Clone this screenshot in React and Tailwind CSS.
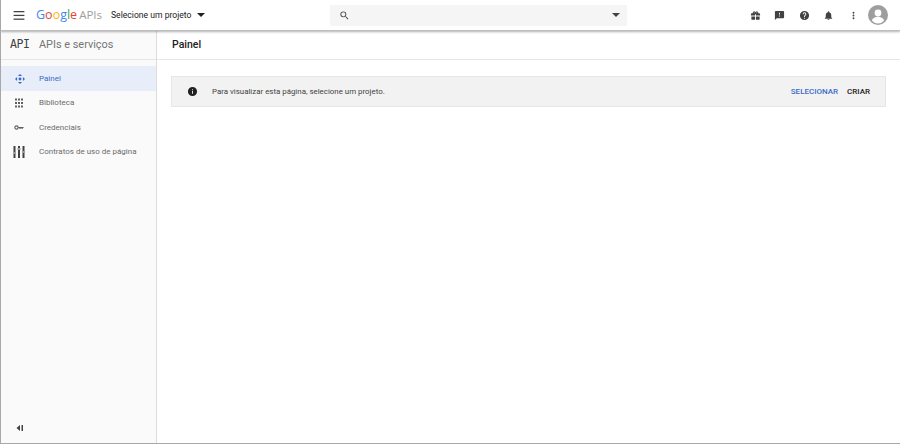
import React from 'react';

const TopIcon = ({ d, className = '' }) => (
  <svg viewBox="0 0 24 24" className={`w-[11px] h-[11px] fill-[#424242] ${className}`}>
    <path d={d} />
  </svg>
);

const NavItem = ({ icon, label, active = false }) => (
  <div className={`flex items-center h-[24.5px] pl-[14px] ${active ? 'bg-[#e8eef9]' : ''}`}>
    <div className="w-[24px] flex-none">{icon}</div>
    <span className={`text-[8px] ${active ? 'text-[#3b6bc9]' : 'text-[#6b6b6b]'}`}>{label}</span>
  </div>
);

const App = () => {
  return (
    <div className="w-[900px] h-[444px] flex flex-col bg-white overflow-hidden border-l border-b border-[#a8a8a8] font-['Roboto',sans-serif]">
      <header className="relative z-10 h-[31px] flex-none flex items-center bg-white border-b border-[#bdbdbd] shadow-[0_1px_2px_rgba(0,0,0,0.3)]">
        <svg viewBox="0 0 12 10" className="w-[12px] h-[9px] ml-[12px] fill-[#424242]">
          <rect x="0" y="0" width="12" height="1.4" />
          <rect x="0" y="4.2" width="12" height="1.4" />
          <rect x="0" y="8.4" width="12" height="1.4" />
        </svg>
        <div className="ml-[11px] w-[65px] flex items-baseline text-[12.5px] leading-none font-['Open_Sans',sans-serif]">
          <span className="text-[#4285f4]">G</span>
          <span className="text-[#ea4335]">o</span>
          <span className="text-[#fbbc05]">o</span>
          <span className="text-[#4285f4]">g</span>
          <span className="text-[#34a853]">l</span>
          <span className="text-[#ea4335]">e</span>
          <span className="ml-[2px] text-[#9e9e9e] text-[11.5px]">APIs</span>
        </div>
        <span className="ml-[10px] text-[8.6px] text-[#212121]">Selecione um projeto</span>
        <div className="ml-[6px] w-0 h-0 border-x-[4px] border-x-transparent border-t-[4px] border-t-[#212121]"></div>
        <div className="ml-[125px] w-[297px] h-[21px] flex items-center justify-between bg-[#f5f5f5] pl-[9px] pr-[7px]">
          <TopIcon d="M15.5 14h-.79l-.28-.27A6.47 6.47 0 0 0 16 9.5 6.5 6.5 0 1 0 9.5 16c1.61 0 3.09-.59 4.23-1.57l.27.28v.79l5 4.99L20.49 19l-4.99-5zm-6 0C7.01 14 5 11.99 5 9.5S7.01 5 9.5 5 14 7.01 14 9.5 11.99 14 9.5 14z" />
          <div className="w-0 h-0 border-x-[4px] border-x-transparent border-t-[4px] border-t-[#424242]"></div>
        </div>
        <div className="ml-auto flex items-center gap-[13.5px] pr-[12px]">
          <TopIcon d="M20 7h-2.2c.1-.3.2-.6.2-1a3 3 0 0 0-5.5-1.7L12 5l-.5-.7A3 3 0 0 0 6 6c0 .4.1.7.2 1H4a2 2 0 0 0-2 2v3h9V9h2v3h9V9a2 2 0 0 0-2-2zM9 7a1 1 0 1 1 0-2 1 1 0 0 1 0 2zm6 0a1 1 0 1 1 0-2 1 1 0 0 1 0 2zM3 14v6a1 1 0 0 0 1 1h7v-7H3zm10 7h7a1 1 0 0 0 1-1v-6h-8v7z" />
          <TopIcon d="M20 2H4a2 2 0 0 0-2 2v18l4-4h14a2 2 0 0 0 2-2V4a2 2 0 0 0-2-2zm-7 12h-2v-2h2v2zm0-4h-2V6h2v4z" />
          <TopIcon d="M12 2a10 10 0 1 0 0 20 10 10 0 0 0 0-20zm1 17h-2v-2h2v2zm2.07-7.75-.9.92A3.4 3.4 0 0 0 13 15h-2v-.5c0-1.1.45-2.1 1.17-2.83l1.24-1.26A2 2 0 1 0 10 9H8a4 4 0 1 1 8 0c0 .88-.36 1.68-.93 2.25z" />
          <TopIcon d="M12 22a2 2 0 0 0 2-2h-4a2 2 0 0 0 2 2zm6-6v-5c0-3.07-1.63-5.64-4.5-6.32V4a1.5 1.5 0 0 0-3 0v.68C7.64 5.36 6 7.92 6 11v5l-2 2v1h16v-1l-2-2z" />
          <TopIcon d="M12 8a2 2 0 1 0 0-4 2 2 0 0 0 0 4zm0 2a2 2 0 1 0 0 4 2 2 0 0 0 0-4zm0 6a2 2 0 1 0 0 4 2 2 0 0 0 0-4z" />
          <svg viewBox="0 0 20 20" className="w-[20px] h-[20px] -ml-[4px]">
            <circle cx="10" cy="10" r="10" fill="#9e9e9e" />
            <circle cx="10" cy="8" r="3.4" fill="#fff" />
            <path d="M3.8 15.5c1-2.6 3.6-3.8 6.2-3.8s5.200 1.200 6.200 3.800a8 8 0 0 1-12.400 0z" fill="#fff" />
          </svg>
        </div>
      </header>

      <div className="flex-1 flex min-h-0">
        <aside className="w-[156px] flex-none flex flex-col bg-[#fafafa] border-r border-[#dcdcdc]">
          <div className="h-[29px] flex items-center pl-[9px] border-b border-[#e6e6e6]">
            <span className="w-[29px] text-[11.5px] font-['DejaVu_Sans_Mono',monospace] text-[#424242] tracking-[-0.4px]">API</span>
            <span className="text-[10.9px] text-[#757575]">APIs e serviços</span>
          </div>
          <nav className="mt-[6.25px] flex flex-col">
            <NavItem
              active
              label="Painel"
              icon={
                <svg viewBox="0 0 24 24" className="w-[10px] h-[10px] fill-[#3b6bc9]">
                  <path d="M12 0l5 5H7zM12 24l-5-5h10zM0 12l5-5v10zM24 12l-5 5V7z" />
                  <circle cx="12" cy="12" r="3.500" />
                </svg>
              }
            />
            <NavItem
              label="Biblioteca"
              icon={
                <svg viewBox="0 0 10 10" className="w-[10px] h-[10px] fill-[#616161] ml-[-1px]">
                  <rect x="1" y="0.500" width="2" height="2" /><rect x="4" y="0.500" width="2" height="2" /><rect x="7" y="0.500" width="2" height="2" />
                  <rect x="1" y="4" width="2" height="2" /><rect x="4" y="4" width="2" height="2" /><rect x="7" y="4" width="2" height="2" />
                  <rect x="1" y="7.500" width="2" height="2" /><rect x="4" y="7.500" width="2" height="2" /><rect x="7" y="7.500" width="2" height="2" />
                </svg>
              }
            />
            <NavItem
              label="Credenciais"
              icon={
                <svg viewBox="0 0 12 8" className="w-[10px] h-[7px] ml-[-1px]">
                  <circle cx="3" cy="4" r="2" fill="none" stroke="#616161" strokeWidth="1.400" />
                  <path d="M5 3.300h6.500v1.400h-1v1.200H9V4.700H8v1.200H6.500V4.700H5z" fill="#616161" />
                </svg>
              }
            />
            <NavItem
              label="Contratos de uso de página"
              icon={
                <svg viewBox="0 0 12 12" className="w-[12px] h-[12px] ml-[-2px] fill-[#424242]">
                  <rect x="0.500" y="0" width="2" height="6" /><rect x="0.500" y="8" width="2" height="4" />
                  <rect x="5" y="0" width="2" height="2" /><rect x="5" y="4" width="2" height="8" />
                  <rect x="9.500" y="0" width="2" height="5" /><rect x="9.500" y="7" width="2" height="5" />
                  <rect x="0" y="6.500" width="3" height="1" /><rect x="4.500" y="2.500" width="3" height="1" /><rect x="9" y="5.500" width="3" height="1" />
                </svg>
              }
            />
          </nav>
          <div className="mt-auto mb-[11px] pl-[15px]">
            <svg viewBox="0 0 8 8" className="w-[8px] h-[8px] fill-[#424242]">
              <path d="M4 1v6L0.500 4z" />
              <rect x="5.500" y="1" width="1.500" height="6" />
            </svg>
          </div>
        </aside>

        <main className="flex-1 min-w-0">
          <div className="h-[29px] flex items-center pl-[15px] border-b border-[#e6e6e6]">
            <h1 className="text-[10.5px] font-medium text-[#212121]">Painel</h1>
          </div>
          <div className="ml-[14px] mr-[14px] mt-[16px] h-[31px] flex items-center bg-[#f2f2f2] border border-[#e6e6e6] pl-[15px] pr-[15px]">
            <svg viewBox="0 0 24 24" className="w-[11px] h-[11px] fill-[#212121]">
              <path d="M12 2a10 10 0 1 0 0 20 10 10 0 0 0 0-20zm1 15h-2v-6h2v6zm0-8h-2V7h2v2z" />
            </svg>
            <span className="ml-[14px] text-[7.9px] text-[#424242]">Para visualizar esta página, selecione um projeto.</span>
            <div className="ml-auto flex items-center gap-[9px] text-[8px] font-medium">
              <span className="text-[#3b6bc9]">SELECIONAR</span>
              <span className="text-[#212121]">CRIAR</span>
            </div>
          </div>
        </main>
      </div>
    </div>
  );
};

export default App;
